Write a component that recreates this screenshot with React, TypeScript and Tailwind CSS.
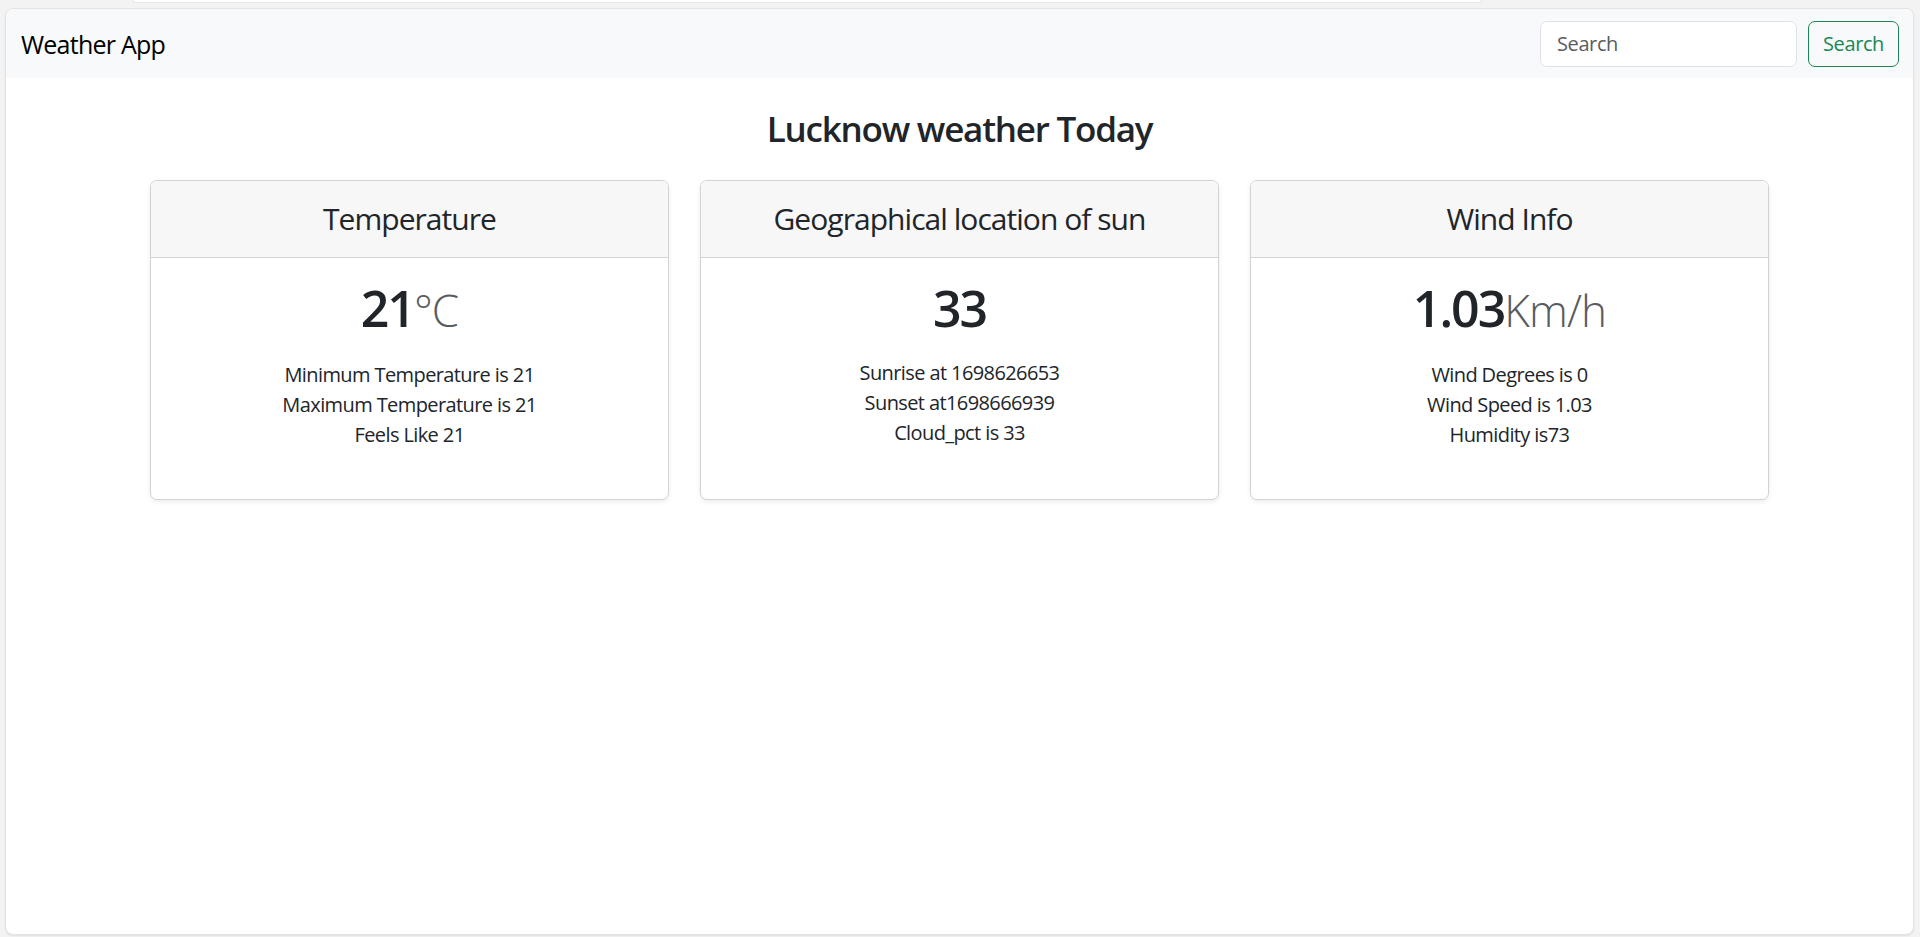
import React from "react";

type Card = {
  title: string;
  value: string;
  unit?: string;
  lines: string[];
};

const cards: Card[] = [
  {
    title: "Temperature",
    value: "21",
    unit: "°C",
    lines: ["Minimum Temperature is 21", "Maximum Temperature is 21", "Feels Like 21"],
  },
  {
    title: "Geographical location of sun",
    value: "33",
    lines: ["Sunrise at 1698626653", "Sunset at1698666939", "Cloud_pct is 33"],
  },
  {
    title: "Wind Info",
    value: "1.03",
    unit: "Km/h",
    lines: ["Wind Degrees is 0", "Wind Speed is 1.03", "Humidity is73"],
  },
];

const WeatherCard = ({ card }: { card: Card }) => {
  return (
    <div className="w-[519px] rounded-[7px] border border-[#d3d3d4] bg-white text-center shadow-[0_2px_5px_rgba(0,0,0,0.075)] overflow-hidden">
      <div className="bg-[#f7f7f7] border-b border-[#d3d3d4] py-[20px] px-[20px]">
        <h4 className="text-[30px] leading-[36px] font-normal tracking-[-0.032em] text-[#212529]">
          {card.title}
        </h4>
      </div>
      <div className="p-[20px]">
        <h1 className="text-[50px] leading-[60px] font-semibold tracking-[-0.04em] text-[#212529]">
          {card.value}
          {card.unit ? (
            <small className="text-[44px] font-light tracking-[-0.02em] text-[#595c5f]">{card.unit}</small>
          ) : (
            <></>
          )}
        </h1>
        <ul className="mt-[20px] mb-[29px] text-[20px] leading-[30px] tracking-[-0.03em] text-[#212529]">
          {card.lines.map((line, index) => (
            <li key={index}>{line}</li>
          ))}
        </ul>
      </div>
    </div>
  );
};

const App = () => {
  return (
    <div className="h-[937px] w-full bg-[#f3f3f3] flex flex-col overflow-hidden font-['Open_Sans',sans-serif]">
      {/* browser chrome strip */}
      <div className="h-[8px] flex">
        <div className="ml-[132px] w-[1350px] h-[3px] bg-white rounded-b-[6px] border-b border-x border-[#e6e6e6]"></div>
      </div>

      <div className="flex-1 ml-[5px] mr-[6px] mb-[2px] rounded-[8px] border border-[#e3e3e3] bg-white overflow-hidden shadow-[0_1px_2px_rgba(0,0,0,0.08)] flex flex-col">
        <nav className="h-[69px] bg-[#f8f9fa] flex items-center justify-between pl-[15px] pr-[14px]">
          <span className="text-[25px] leading-[38px] tracking-[-0.03em] text-black">Weather App</span>
          <form className="flex items-center gap-[11px]" onSubmit={(e) => e.preventDefault()}>
            <input
              type="search"
              placeholder="Search"
              className="w-[257px] h-[46px] rounded-[7px] border border-[#dee2e6] bg-white px-[16px] text-[20px] tracking-[-0.02em] text-[#212529] placeholder:text-[#595c5f] outline-none"
            />
            <button
              type="submit"
              className="w-[91px] h-[46px] rounded-[7px] border border-[#198754] text-[20px] tracking-[-0.02em] text-[#198754] bg-transparent"
            >
              Search
            </button>
          </form>
        </nav>

        <main className="flex flex-col items-center">
          <h3 className="mt-[30px] mb-[30px] text-[35px] leading-[42px] font-semibold tracking-[-0.035em] text-[#212529]">
            Lucknow weather Today
          </h3>
          <div className="flex gap-[31px]">
            {cards.map((card, index) => (
              <WeatherCard key={index} card={card} />
            ))}
          </div>
        </main>
      </div>
    </div>
  );
};

export default App;
